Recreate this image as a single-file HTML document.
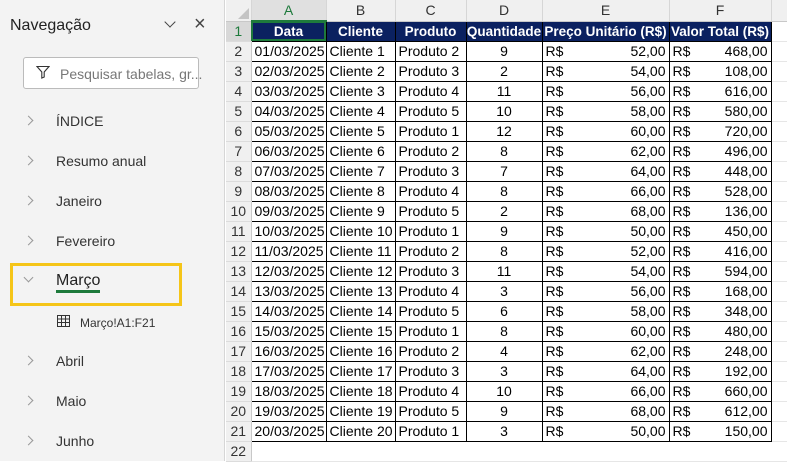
<!DOCTYPE html>
<html><head><meta charset="utf-8"><style>
*{box-sizing:border-box;margin:0;padding:0}
body{width:787px;height:461px;overflow:hidden;background:#fff;font-family:"Liberation Sans",sans-serif;position:relative}
#side{position:absolute;left:0;top:0;width:225px;height:461px;background:#f3f3f3;border-right:1px solid #d6d6d6}
.t{position:absolute;font-size:14px;color:#333}
.chev{position:absolute;left:25px;width:7px;height:7px;border-right:1.2px solid #999;border-top:1.2px solid #999;transform:rotate(45deg)}
#grid{position:absolute;left:226px;top:0;width:570px}
table{border-collapse:collapse;table-layout:fixed;font-size:14px;width:565px}
td{height:20px;padding:0 3px;white-space:nowrap;overflow:hidden;border:1px solid #000;color:#000}
td.rh{background:#f0f0f0;color:#333;text-align:center;border:none;border-bottom:1px solid #dcdcdc;border-right:1px solid #c8c8c8;padding:0}
tr.ch td{background:#f0f0f0;color:#333;text-align:center;height:21px;border:none;border-right:1px solid #d6d6d6;border-bottom:1px solid #c8c8c8}
tr.h td.d{background:#0b2160;color:#fff;font-weight:bold;text-align:center;padding:0;font-size:13.5px}
.c{text-align:center}.r{text-align:right}
td.e{border:none;border-bottom:1px solid #e6e6e6}
span.rs{float:left}
</style></head><body>
<div id="side">
<div class="t" style="left:10px;top:17px;font-size:16px;color:#222">Navegação</div>
<div style="position:absolute;left:166px;top:18px;width:8px;height:8px;border-right:1.3px solid #444;border-bottom:1.3px solid #444;transform:rotate(45deg)"></div>
<div class="t" style="left:194px;top:13px;font-size:20px;color:#444">×</div>
<div style="position:absolute;left:23px;top:57px;width:176px;height:32px;background:#fff;border:1px solid #bbb;border-radius:3px"></div>
<svg style="position:absolute;left:36px;top:65px" width="14" height="14" viewBox="0 0 14 14"><path d="M1 1.5h12L8.2 7v5L5.8 13V7z" fill="none" stroke="#333" stroke-width="1.1"/></svg>
<div class="t" style="left:60px;top:66px;color:#777">Pesquisar tabelas, gr...</div>
<div class="chev" style="top:117px"></div><div class="t" style="left:56px;top:113px">ÍNDICE</div>
<div class="chev" style="top:157px"></div><div class="t" style="left:56px;top:153px">Resumo anual</div>
<div class="chev" style="top:197px"></div><div class="t" style="left:56px;top:193px">Janeiro</div>
<div class="chev" style="top:237px"></div><div class="t" style="left:56px;top:233px">Fevereiro</div>
<div style="position:absolute;left:10px;top:263px;width:172px;height:43px;border:3px solid #f5c518"></div>
<div style="position:absolute;left:25px;top:274px;width:7px;height:7px;border-right:1.2px solid #999;border-bottom:1.2px solid #999;transform:rotate(45deg)"></div>
<div class="t" style="left:56px;top:272px;font-size:16px;color:#222">Março</div>
<div style="position:absolute;left:56px;top:290px;width:44px;height:3px;background:#1e7a3c"></div>
<svg style="position:absolute;left:57px;top:315px" width="13" height="12" viewBox="0 0 13 12"><path d="M.5.5h12v11H.5zM.5 4h12M.5 7.5h12M4.5.5v11M8.5.5v11" fill="none" stroke="#333" stroke-width="1"/></svg>
<div class="t" style="left:80px;top:316px;font-size:12px">Março!A1:F21</div>
<div class="chev" style="top:357px"></div><div class="t" style="left:56px;top:353px">Abril</div>
<div class="chev" style="top:397px"></div><div class="t" style="left:56px;top:393px">Maio</div>
<div class="chev" style="top:437px"></div><div class="t" style="left:56px;top:433px">Junho</div>
</div>
<div id="grid"><table>
<colgroup><col style="width:25px"><col style="width:75px"><col style="width:69px"><col style="width:71px"><col style="width:76px"><col style="width:127px"><col style="width:102px"><col style="width:20px"></colgroup>
<tr class="ch"><td style="position:relative"><div style="position:absolute;right:2px;bottom:2px;width:0;height:0;border-left:11px solid transparent;border-bottom:11px solid #c4c4c4"></div></td><td style="color:#1e7a3c;background:#e0e0e0;border-bottom:2px solid #1e7a3c">A</td><td>B</td><td>C</td><td>D</td><td>E</td><td>F</td><td></td></tr>
<tr class="h"><td class="rh" style="background:#d8d8d8;color:#1e7a3c">1</td><td class="d" style="outline:2px solid #1e7a3c;outline-offset:-2px">Data</td><td class="d">Cliente</td><td class="d">Produto</td><td class="d">Quantidade</td><td class="d">Preço Unitário (R$)</td><td class="d">Valor Total (R$)</td><td class="e"></td></tr>
<tr><td class="rh">2</td><td>01/03/2025</td><td>Cliente 1</td><td>Produto 2</td><td class="c">9</td><td class="r"><span class="rs">R$</span>52,00</td><td class="r"><span class="rs">R$</span>468,00</td><td class="e"></td></tr>
<tr><td class="rh">3</td><td>02/03/2025</td><td>Cliente 2</td><td>Produto 3</td><td class="c">2</td><td class="r"><span class="rs">R$</span>54,00</td><td class="r"><span class="rs">R$</span>108,00</td><td class="e"></td></tr>
<tr><td class="rh">4</td><td>03/03/2025</td><td>Cliente 3</td><td>Produto 4</td><td class="c">11</td><td class="r"><span class="rs">R$</span>56,00</td><td class="r"><span class="rs">R$</span>616,00</td><td class="e"></td></tr>
<tr><td class="rh">5</td><td>04/03/2025</td><td>Cliente 4</td><td>Produto 5</td><td class="c">10</td><td class="r"><span class="rs">R$</span>58,00</td><td class="r"><span class="rs">R$</span>580,00</td><td class="e"></td></tr>
<tr><td class="rh">6</td><td>05/03/2025</td><td>Cliente 5</td><td>Produto 1</td><td class="c">12</td><td class="r"><span class="rs">R$</span>60,00</td><td class="r"><span class="rs">R$</span>720,00</td><td class="e"></td></tr>
<tr><td class="rh">7</td><td>06/03/2025</td><td>Cliente 6</td><td>Produto 2</td><td class="c">8</td><td class="r"><span class="rs">R$</span>62,00</td><td class="r"><span class="rs">R$</span>496,00</td><td class="e"></td></tr>
<tr><td class="rh">8</td><td>07/03/2025</td><td>Cliente 7</td><td>Produto 3</td><td class="c">7</td><td class="r"><span class="rs">R$</span>64,00</td><td class="r"><span class="rs">R$</span>448,00</td><td class="e"></td></tr>
<tr><td class="rh">9</td><td>08/03/2025</td><td>Cliente 8</td><td>Produto 4</td><td class="c">8</td><td class="r"><span class="rs">R$</span>66,00</td><td class="r"><span class="rs">R$</span>528,00</td><td class="e"></td></tr>
<tr><td class="rh">10</td><td>09/03/2025</td><td>Cliente 9</td><td>Produto 5</td><td class="c">2</td><td class="r"><span class="rs">R$</span>68,00</td><td class="r"><span class="rs">R$</span>136,00</td><td class="e"></td></tr>
<tr><td class="rh">11</td><td>10/03/2025</td><td>Cliente 10</td><td>Produto 1</td><td class="c">9</td><td class="r"><span class="rs">R$</span>50,00</td><td class="r"><span class="rs">R$</span>450,00</td><td class="e"></td></tr>
<tr><td class="rh">12</td><td>11/03/2025</td><td>Cliente 11</td><td>Produto 2</td><td class="c">8</td><td class="r"><span class="rs">R$</span>52,00</td><td class="r"><span class="rs">R$</span>416,00</td><td class="e"></td></tr>
<tr><td class="rh">13</td><td>12/03/2025</td><td>Cliente 12</td><td>Produto 3</td><td class="c">11</td><td class="r"><span class="rs">R$</span>54,00</td><td class="r"><span class="rs">R$</span>594,00</td><td class="e"></td></tr>
<tr><td class="rh">14</td><td>13/03/2025</td><td>Cliente 13</td><td>Produto 4</td><td class="c">3</td><td class="r"><span class="rs">R$</span>56,00</td><td class="r"><span class="rs">R$</span>168,00</td><td class="e"></td></tr>
<tr><td class="rh">15</td><td>14/03/2025</td><td>Cliente 14</td><td>Produto 5</td><td class="c">6</td><td class="r"><span class="rs">R$</span>58,00</td><td class="r"><span class="rs">R$</span>348,00</td><td class="e"></td></tr>
<tr><td class="rh">16</td><td>15/03/2025</td><td>Cliente 15</td><td>Produto 1</td><td class="c">8</td><td class="r"><span class="rs">R$</span>60,00</td><td class="r"><span class="rs">R$</span>480,00</td><td class="e"></td></tr>
<tr><td class="rh">17</td><td>16/03/2025</td><td>Cliente 16</td><td>Produto 2</td><td class="c">4</td><td class="r"><span class="rs">R$</span>62,00</td><td class="r"><span class="rs">R$</span>248,00</td><td class="e"></td></tr>
<tr><td class="rh">18</td><td>17/03/2025</td><td>Cliente 17</td><td>Produto 3</td><td class="c">3</td><td class="r"><span class="rs">R$</span>64,00</td><td class="r"><span class="rs">R$</span>192,00</td><td class="e"></td></tr>
<tr><td class="rh">19</td><td>18/03/2025</td><td>Cliente 18</td><td>Produto 4</td><td class="c">10</td><td class="r"><span class="rs">R$</span>66,00</td><td class="r"><span class="rs">R$</span>660,00</td><td class="e"></td></tr>
<tr><td class="rh">20</td><td>19/03/2025</td><td>Cliente 19</td><td>Produto 5</td><td class="c">9</td><td class="r"><span class="rs">R$</span>68,00</td><td class="r"><span class="rs">R$</span>612,00</td><td class="e"></td></tr>
<tr><td class="rh">21</td><td>20/03/2025</td><td>Cliente 20</td><td>Produto 1</td><td class="c">3</td><td class="r"><span class="rs">R$</span>50,00</td><td class="r"><span class="rs">R$</span>150,00</td><td class="e"></td></tr>
<tr><td class="rh">22</td><td class="e"></td><td class="e"></td><td class="e"></td><td class="e"></td><td class="e"></td><td class="e"></td><td class="e"></td></tr>
</table></div>
</body></html>
